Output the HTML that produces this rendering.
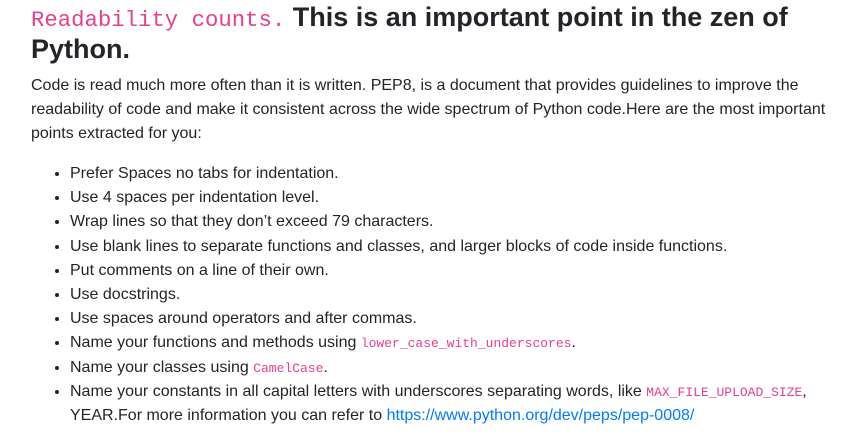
<!DOCTYPE html>
<html><head><meta charset="utf-8"><style>
body{margin:0;background:#fff;width:848px;height:440px;overflow:hidden;font-family:"Liberation Sans",sans-serif;color:#212529}
.w{position:absolute;left:31px;top:0;width:810px}
h2{margin:0;padding-top:1px;font-size:27px;line-height:32px;font-weight:bold;color:#212529;white-space:nowrap}
code{font-family:"Liberation Mono",monospace;color:#e83e8c;line-height:1}
h2 code{font-weight:normal;font-size:22.3px}
p{margin:9px 0 0;font-size:16px;line-height:24px;white-space:nowrap}
ul{margin:16px 0 0;padding-left:39px;font-size:16px;line-height:24.2px}
li{white-space:nowrap;height:24.2px}
li.two{height:48.4px}
li code{font-size:13px}
a{color:#007bff;text-decoration:none}
</style></head><body><div class="w">
<h2><code>Readability counts.</code> This is an important point in the zen of<br>Python.</h2>
<p>Code is read much more often than it is written. PEP8, is a document that provides guidelines to improve the<br>readability of code and make it consistent across the wide spectrum of Python code.Here are the most important<br>points extracted for you:</p>
<ul>
<li>Prefer Spaces no tabs for indentation.</li>
<li>Use 4 spaces per indentation level.</li>
<li>Wrap lines so that they don’t exceed 79 characters.</li>
<li>Use blank lines to separate functions and classes, and larger blocks of code inside functions.</li>
<li>Put comments on a line of their own.</li>
<li>Use docstrings.</li>
<li>Use spaces around operators and after commas.</li>
<li>Name your functions and methods using <code>lower_case_with_underscores</code>.</li>
<li>Name your classes using <code>CamelCase</code>.</li>
<li class="two">Name your constants in all capital letters with underscores separating words, like <code>MAX_FILE_UPLOAD_SIZE</code>,<br>YEAR.For more information you can refer to <a>https://www.python.org/dev/peps/pep-0008/</a></li>
</ul>
</div></body></html>
